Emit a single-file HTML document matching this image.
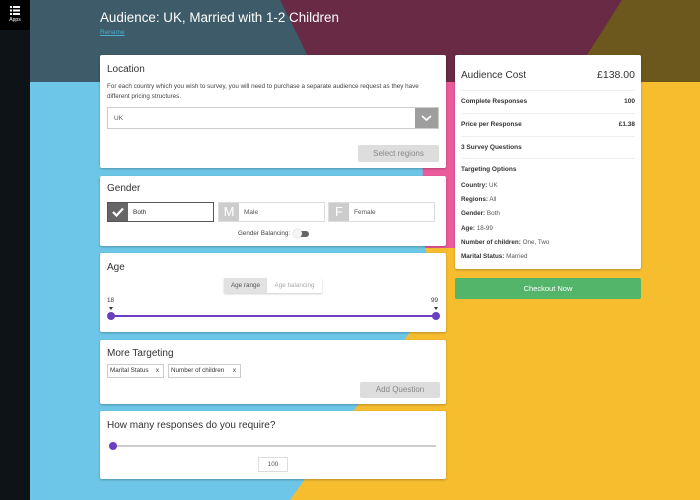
<!DOCTYPE html>
<html><head><style>
*{box-sizing:border-box;margin:0;padding:0}
body{width:700px;height:500px;overflow:hidden;position:relative;font-family:"Liberation Sans",sans-serif;color:#333}
#bg{position:absolute;left:0;top:0}
.side{position:absolute;left:0;top:0;width:30px;height:500px;background:#0e1317}
.apps{position:absolute;left:0;top:0;width:30px;height:30px;background:#000;color:#fff;font-size:5px;text-align:center}
.title{position:absolute;left:100px;top:10px;color:#fff;font-size:13.4px}
.ren{position:absolute;left:100px;top:29px;color:#4ab0d0;font-size:6.5px;text-decoration:underline}
.card{position:absolute;background:#fff;border-radius:2px;box-shadow:0 1px 2px rgba(0,0,0,.25)}
h3{font-weight:normal;font-size:10px;color:#333;position:absolute;left:7px}
.sm{font-size:6.3px;color:#444;line-height:10px}
.btn{position:absolute;background:#ddd;color:#888;font-size:8px;text-align:center;border-radius:2px}
.row{position:absolute;left:6px;right:6px;font-size:6.5px;font-weight:bold;color:#333;border-top:1px solid #eee;height:23px;line-height:22px}
.kv{position:absolute;left:6px;font-size:6.3px;color:#555}
.kv b{color:#333}
</style></head><body>
<svg id="bg" width="700" height="500">
<rect width="700" height="500" fill="#6dc6e7"/>
<polygon points="445,82 700,82 700,500 290,500 440,290 425,248" fill="#f6bd2f"/>
<polygon points="420,82 455,82 455,248 425,248" fill="#ea5b9c"/>
<polygon points="0,0 700,0 700,82 0,82" fill="#3d5b68"/>
<polygon points="280,0 700,0 700,82 320,82 300,40" fill="#682a45"/>
<polygon points="622,0 700,0 700,82 570,82" fill="#6c571d"/>
</svg>
<div class="side"></div>
<div class="apps"><svg width="10" height="9" style="margin-top:6px"><g fill="#fff"><rect x="0" y="0" width="2" height="2"/><rect x="3" y="0" width="7" height="2"/><rect x="0" y="3.5" width="2" height="2"/><rect x="3" y="3.5" width="7" height="2"/><rect x="0" y="7" width="2" height="2"/><rect x="3" y="7" width="7" height="2"/></g></svg><div>Apps</div></div>
<div class="title">Audience: UK, Married with 1-2 Children</div>
<div class="ren">Rename</div>

<div class="card" style="left:100px;top:55px;width:346px;height:113px">
<h3 style="top:9px">Location</h3>
<div class="sm" style="position:absolute;left:7px;top:27px;width:335px">For each country which you wish to survey, you will need to purchase a separate audience request as they have different pricing structures.</div>
<div style="position:absolute;left:7px;top:52px;width:332px;height:22px;border:1px solid #ccc;font-size:6.5px;color:#555;padding:7px 6px">UK<div style="position:absolute;right:0;top:0;width:23px;height:20px;background:#9e9e9e"><svg width="23" height="20"><path d="M7 8 L11.5 12 L16 8" stroke="#fff" stroke-width="1.6" fill="none"/></svg></div></div>
<div class="btn" style="left:258px;top:90px;width:81px;height:17px;line-height:17px">Select regions</div>
</div>

<div class="card" style="left:100px;top:176px;width:346px;height:70px">
<h3 style="top:7px">Gender</h3>
<div style="position:absolute;left:7px;top:26px;width:107px;height:20px;border:1px solid #555;font-size:6.5px;padding:6px 0 0 25px">Both<div style="position:absolute;left:0;top:0;width:20px;height:18px;background:#666"><svg width="20" height="18"><path d="M5 9 L8.5 12.5 L15 5.5" stroke="#fff" stroke-width="2.2" fill="none"/></svg></div></div>
<div style="position:absolute;left:118px;top:26px;width:107px;height:20px;border:1px solid #ddd;font-size:6.5px;color:#555;padding:6px 0 0 25px">Male<div style="position:absolute;left:0;top:0;width:20px;height:18px;background:#ccc;color:#fff;font-size:13px;text-align:center;line-height:18px;padding:0">M</div></div>
<div style="position:absolute;left:228px;top:26px;width:107px;height:20px;border:1px solid #ddd;font-size:6.5px;color:#555;padding:6px 0 0 25px">Female<div style="position:absolute;left:0;top:0;width:20px;height:18px;background:#ccc;color:#fff;font-size:13px;text-align:center;line-height:18px">F</div></div>
<div style="position:absolute;left:138px;top:54px;font-size:6.3px;color:#444">Gender Balancing:</div>
<div style="position:absolute;left:196px;top:55px;width:13px;height:6px;border-radius:3px;background:#666"></div>
<div style="position:absolute;left:193px;top:53px;width:9px;height:9px;border-radius:50%;background:#f5f5f5;box-shadow:0 0 1px #999"></div>
</div>

<div class="card" style="left:100px;top:253px;width:346px;height:79px">
<h3 style="top:9px">Age</h3>
<div style="position:absolute;left:124px;top:25px;width:98px;height:15px;box-shadow:0 1px 2px rgba(0,0,0,.2);font-size:6.3px">
<div style="position:absolute;left:0;top:0;width:43px;height:15px;background:#e2e2e2;color:#555;text-align:center;line-height:15px">Age range</div>
<div style="position:absolute;left:43px;top:0;width:55px;height:15px;color:#aaa;text-align:center;line-height:15px">Age balancing</div></div>
<div style="position:absolute;left:7px;top:44px;font-size:6.3px">18</div>
<div style="position:absolute;left:331px;top:44px;font-size:6.3px">99</div>
<div style="position:absolute;left:9px;top:54px;border:2.5px solid transparent;border-top:3px solid #333"></div>
<div style="position:absolute;left:334px;top:54px;border:2.5px solid transparent;border-top:3px solid #333"></div>
<div style="position:absolute;left:10px;top:62px;width:326px;height:2px;background:#6a3fc0"></div>
<div style="position:absolute;left:7px;top:59px;width:8px;height:8px;border-radius:50%;background:#6a3fc0"></div>
<div style="position:absolute;left:332px;top:59px;width:8px;height:8px;border-radius:50%;background:#6a3fc0"></div>
</div>

<div class="card" style="left:100px;top:340px;width:346px;height:64px">
<h3 style="top:8px">More Targeting</h3>
<div style="position:absolute;left:7px;top:24px;width:57px;height:14px;border:1px solid #ccc;font-size:6.3px;line-height:12px;padding-left:2px">Marital Status<span style="position:absolute;right:4px">x</span></div>
<div style="position:absolute;left:68px;top:24px;width:73px;height:14px;border:1px solid #ccc;font-size:6.3px;line-height:12px;padding-left:2px">Number of children<span style="position:absolute;right:4px">x</span></div>
<div class="btn" style="left:260px;top:42px;width:80px;height:16px;line-height:16px">Add Question</div>
</div>

<div class="card" style="left:100px;top:411px;width:346px;height:68px">
<h3 style="top:9px">How many responses do you require?</h3>
<div style="position:absolute;left:12px;top:34px;width:324px;height:2px;background:#ccc"></div>
<div style="position:absolute;left:9px;top:31px;width:8px;height:8px;border-radius:50%;background:#6a3fc0"></div>
<div style="position:absolute;left:158px;top:46px;width:30px;height:15px;border:1px solid #ddd;font-size:6.3px;text-align:center;line-height:13px;color:#555">100</div>
</div>

<div class="card" style="left:455px;top:55px;width:186px;height:214px">
<div style="position:absolute;left:6px;top:15px;font-size:10px">Audience Cost</div>
<div style="position:absolute;right:6px;top:14px;font-size:10.5px">£138.00</div>
<div class="row" style="top:35px">Complete Responses<span style="float:right">100</span></div>
<div class="row" style="top:58px">Price per Response<span style="float:right">£1.38</span></div>
<div class="row" style="top:81px">3 Survey Questions</div>
<div class="row" style="top:103px">Targeting Options</div>
<div class="kv" style="top:127px"><b>Country:</b> UK</div>
<div class="kv" style="top:141px"><b>Regions:</b> All</div>
<div class="kv" style="top:155px"><b>Gender:</b> Both</div>
<div class="kv" style="top:170px"><b>Age:</b> 18-99</div>
<div class="kv" style="top:184px"><b>Number of children:</b> One, Two</div>
<div class="kv" style="top:198px"><b>Marital Status:</b> Married</div>
</div>
<div style="position:absolute;left:455px;top:278px;width:186px;height:21px;background:#52b56a;border-radius:2px;color:#fff;font-size:7.5px;text-align:center;line-height:21px">Checkout Now</div>
</body></html>
